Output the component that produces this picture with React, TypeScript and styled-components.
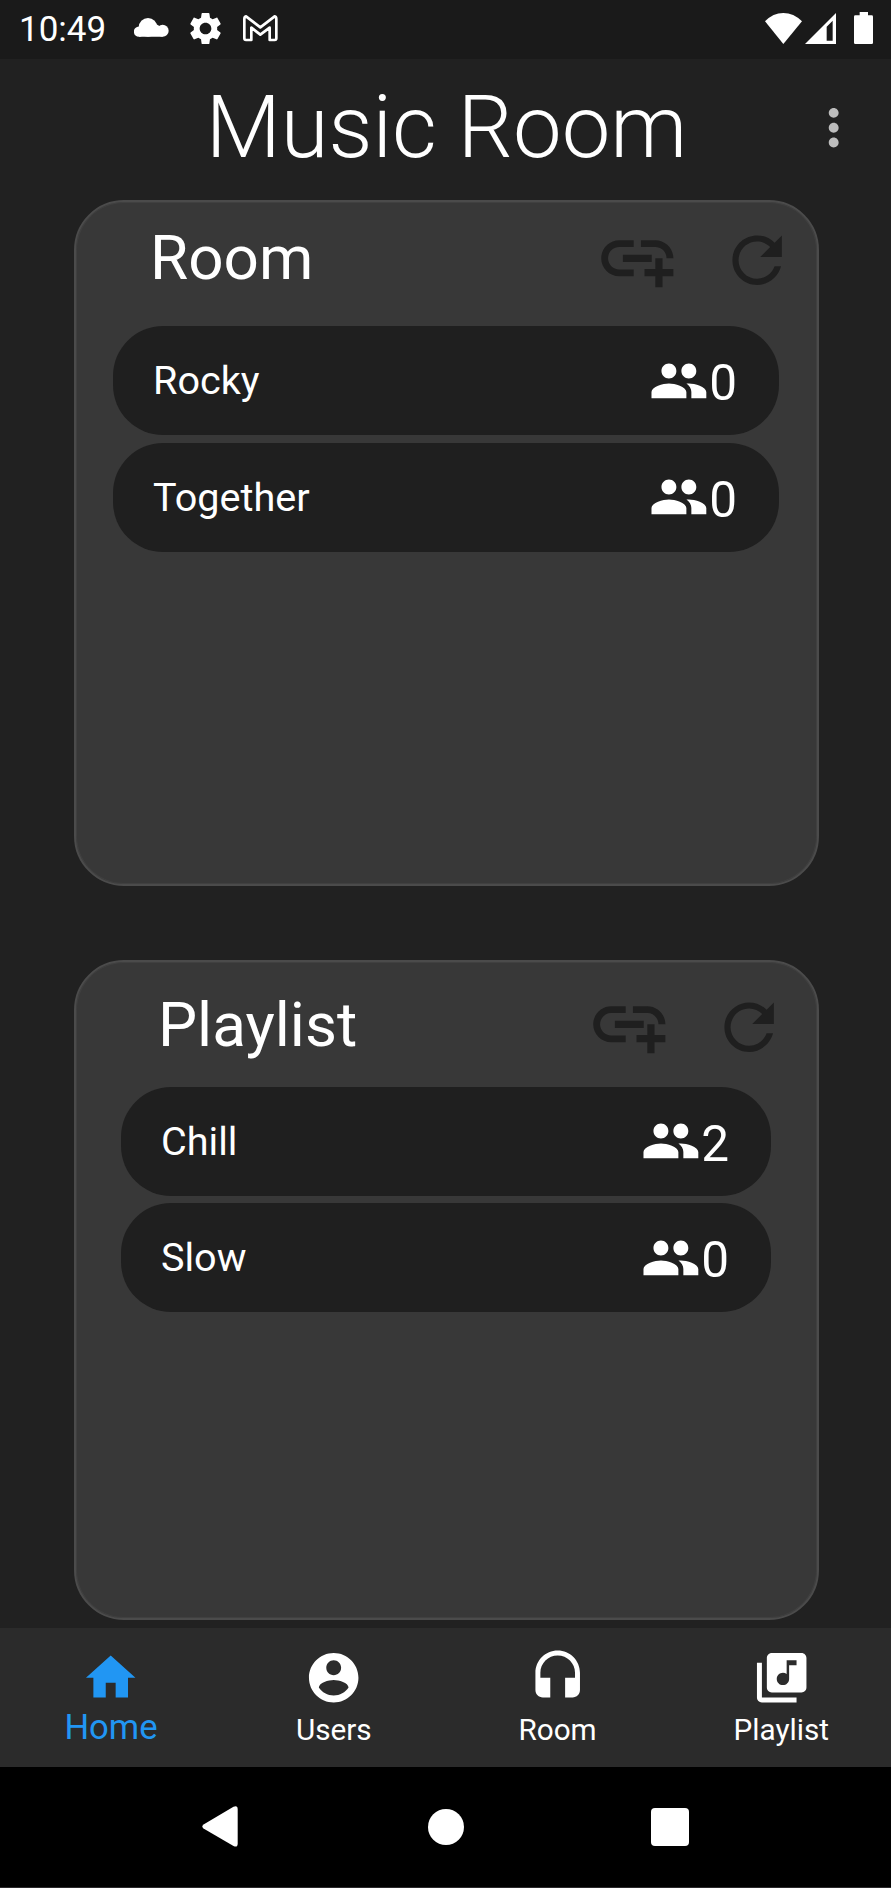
import React from "react";
import styled, { createGlobalStyle } from "styled-components";

const GlobalStyle = createGlobalStyle`
  * { box-sizing: border-box; }
  body { margin: 0; background: #212121; font-family: Roboto, "Liberation Sans", sans-serif; }
`;

const Screen = styled.div`
  display: flex;
  flex-direction: column;
  width: 891px;
  height: 1888px;
  background: #212121;
  color: #fff;
  overflow: hidden;
`;

const StatusBar = styled.header`
  display: flex;
  align-items: flex-start;
  justify-content: space-between;
  height: 59px;
  padding: 0 17px 0 19px;
  background: #1a1a1a;
`;

const StatusGroup = styled.div`
  display: flex;
  align-items: flex-start;
`;

const Clock = styled.span`
  width: 115px;
  font-size: 35px;
  line-height: 60px;
`;

const StatusIcon = styled.svg<{ $top: number; $right?: number }>`
  display: block;
  margin-top: ${(p) => p.$top}px;
  margin-right: ${(p) => p.$right ?? 0}px;
  fill: #fff;
`;

const AppBar = styled.div`
  display: grid;
  grid-template-columns: 88px 1fr 88px;
  align-items: center;
  height: 139px;
  padding: 0 13px 2px 15px;
`;

const Title = styled.h1`
  grid-column: 2;
  margin: 0 0 1px;
  text-align: center;
  white-space: nowrap;
  font-size: 86.8px;
  font-weight: 300;
  line-height: 100px;
`;

const MenuButton = styled.button`
  justify-self: center;
  display: block;
  padding: 0;
  border: 0;
  background: none;
  color: #bdbdbd;
`;

const Main = styled.main`
  flex: 1;
  display: flex;
  flex-direction: column;
  gap: 74px;
  padding: 2px 72px 0 74px;
`;

const Card = styled.section<{ $height: number; $inset: number }>`
  height: ${(p) => p.$height}px;
  padding: 0 ${(p) => p.$inset + 1}px 0 ${(p) => p.$inset}px;
  background: #383838;
  border: 2px solid #4b4b4b;
  border-radius: 50px;
  box-shadow: inset 0 0 0 1px #404040;
`;

const CardHeader = styled.div<{ $height: number; $top: number; $bottom: number }>`
  display: flex;
  align-items: center;
  height: ${(p) => p.$height}px;
  padding: ${(p) => p.$top}px 0 ${(p) => p.$bottom}px 37px;
`;

const CardTitle = styled.h2`
  flex: 1;
  margin: 0;
  font-size: 62px;
  font-weight: 400;
  line-height: 72px;
`;

const IconButton = styled.button`
  display: block;
  padding: 0;
  border: 0;
  background: none;
  color: #1f1f1f;
`;

const RefreshButton = styled(IconButton)`
  margin: 4px -15px 0 39px;
`;

const List = styled.ul`
  display: flex;
  flex-direction: column;
  gap: 7.425px;
  margin: 0;
  padding: 0;
  list-style: none;
`;

const Item = styled.li`
  display: flex;
  align-items: center;
  justify-content: space-between;
  height: 109.2px;
  padding: 0 42px 0 40px;
  border-radius: 50px;
  background: #1f1f1f;
`;

const ItemName = styled.span`
  font-size: 39.6px;
  line-height: 48px;
  padding-top: 1px;
`;

const Members = styled.span`
  display: flex;
  align-items: center;
`;

const MemberCount = styled.span`
  font-size: 49.5px;
  line-height: 58px;
  padding-top: 5px;
`;

const TabBar = styled.nav`
  display: grid;
  grid-template-columns: 222px repeat(3, 223.7px);
  height: 139px;
  background: #2b2b2b;
`;

const Tab = styled.a<{ $active?: boolean }>`
  display: flex;
  flex-direction: column;
  align-items: center;
  padding-top: 20px;
  color: ${(p) => (p.$active ? "#2196f3" : "#fff")};
`;

const TabLabel = styled.span<{ $active?: boolean }>`
  font-size: ${(p) => (p.$active ? 34.65 : 29.7)}px;
  line-height: 40px;
  margin-top: ${(p) => (p.$active ? 0 : 3)}px;
`;

const SystemNav = styled.footer`
  display: flex;
  align-items: center;
  gap: 187px;
  height: 121px;
  padding: 0 0 1px 202px;
  background: #000;
  border-bottom: 1px solid #2c2a2c;
`;

const SystemIcon = styled.svg`
  display: block;
  fill: #fff;
`;

const Glyph = styled.svg`
  display: block;
  fill: currentColor;
`;

const paths = {
  more: "M12 8c1.1 0 2-.9 2-2s-.9-2-2-2-2 .9-2 2 .9 2 2 2zm0 2c-1.1 0-2 .9-2 2s.9 2 2 2 2-.9 2-2-.9-2-2-2zm0 6c-1.1 0-2 .9-2 2s.9 2 2 2 2-.9 2-2-.9-2-2-2z",
  addLink:
    "M8 11h8v2H8zm12.1 1H22c0-2.76-2.24-5-5-5h-4v1.9h4c1.71 0 3.1 1.39 3.1 3.1zM3.9 12c0-1.71 1.39-3.1 3.1-3.1h4V7H7c-2.76 0-5 2.24-5 5s2.24 5 5 5h4v-1.9H7c-1.71 0-3.1-1.39-3.1-3.1zM19 12h-2v3h-3v2h3v3h2v-3h3v-2h-3z",
  refresh:
    "M17.65 6.35C16.2 4.9 14.21 4 12 4c-4.42 0-7.99 3.58-7.99 8s3.57 8 7.99 8c3.73 0 6.84-2.55 7.73-6h-2.08c-.82 2.33-3.04 4-5.65 4-3.31 0-6-2.69-6-6s2.69-6 6-6c1.66 0 3.14.69 4.22 1.78L13 11h7V4l-2.35 2.35z",
  people:
    "M16 11c1.66 0 2.99-1.34 2.99-3S17.66 5 16 5c-1.66 0-3 1.34-3 3s1.34 3 3 3zm-8 0c1.66 0 2.99-1.34 2.99-3S9.66 5 8 5C6.34 5 5 6.34 5 8s1.34 3 3 3zm0 2c-2.33 0-7 1.17-7 3.5V19h14v-2.5c0-2.33-4.67-3.5-7-3.5zm8 0c-.29 0-.62.02-.97.05 1.16.84 1.97 1.97 1.97 3.45V19h6v-2.5c0-2.33-4.67-3.5-7-3.5z",
  home: "M10 20v-6h4v6h5v-8h3L12 3 2 12h3v8z",
  account:
    "M12 2C6.48 2 2 6.48 2 12s4.48 10 10 10 10-4.48 10-10S17.52 2 12 2zm0 3c1.66 0 3 1.34 3 3s-1.34 3-3 3-3-1.34-3-3 1.34-3 3-3zm0 14.2c-2.5 0-4.71-1.28-6-3.22.03-1.99 4-3.08 6-3.08 1.99 0 5.97 1.09 6 3.08-1.29 1.94-3.5 3.22-6 3.22z",
  headset:
    "M12 1c-4.97 0-9 4.03-9 9v7c0 1.66 1.34 3 3 3h3v-8H5v-2c0-3.87 3.13-7 7-7s7 3.13 7 7v2h-4v8h3c1.66 0 3-1.34 3-3v-7c0-4.97-4.03-9-9-9z",
  library:
    "M20 2H8c-1.1 0-2 .9-2 2v12c0 1.1.9 2 2 2h12c1.1 0 2-.9 2-2V4c0-1.1-.9-2-2-2zm-2 5h-3v5.5c0 1.38-1.12 2.5-2.5 2.5S10 13.88 10 12.5s1.12-2.5 2.5-2.5c.57 0 1.08.19 1.5.51V5h4v2zM4 6H2v14c0 1.1.9 2 2 2h14v-2H4V6z",
  settings:
    "M19.14 12.94c.04-.3.06-.61.06-.94 0-.32-.02-.64-.07-.94l2.03-1.58c.18-.14.23-.41.12-.61l-1.92-3.32c-.12-.22-.37-.29-.59-.22l-2.39.96c-.5-.38-1.03-.7-1.62-.94l-.36-2.54c-.04-.24-.24-.41-.48-.41h-3.84c-.24 0-.43.17-.47.41l-.36 2.54c-.59.24-1.13.57-1.62.94l-2.39-.96c-.22-.08-.47 0-.59.22L2.74 8.87c-.12.21-.08.47.12.61l2.03 1.58c-.05.3-.09.63-.09.94s.02.64.07.94l-2.03 1.58c-.18.14-.23.41-.12.61l1.92 3.32c.12.22.37.29.59.22l2.39-.96c.5.38 1.03.7 1.62.94l.36 2.54c.05.24.24.41.48.41h3.84c.24 0 .44-.17.47-.41l.36-2.54c.59-.24 1.13-.56 1.62-.94l2.39.96c.22.08.47 0 .59-.22l1.92-3.32c.12-.22.07-.47-.12-.61l-2.01-1.58zM12 15.6c-1.98 0-3.6-1.62-3.6-3.6s1.62-3.6 3.6-3.6 3.6 1.62 3.6 3.6-1.62 3.6-3.6 3.6z",
};

type IconName = keyof typeof paths;

function Icon({ name, size }: { name: IconName; size: number }) {
  return (
    <Glyph width={size} height={size} viewBox="0 0 24 24" aria-hidden="true">
      <path d={paths[name]} />
    </Glyph>
  );
}

interface Entry {
  name: string;
  members: number;
}

interface CollectionProps {
  title: string;
  entries: Entry[];
  height: number;
  inset: number;
  headerHeight: number;
  headerTop?: number;
  headerBottom?: number;
}

function Collection({
  title,
  entries,
  height,
  inset,
  headerHeight,
  headerTop = 0,
  headerBottom = 0,
}: CollectionProps) {
  return (
    <Card $height={height} $inset={inset}>
      <CardHeader $height={headerHeight} $top={headerTop} $bottom={headerBottom}>
        <CardTitle>{title}</CardTitle>
        <IconButton aria-label="Add">
          <Icon name="addLink" size={86.6} />
        </IconButton>
        <RefreshButton aria-label="Refresh">
          <Icon name="refresh" size={74.25} />
        </RefreshButton>
      </CardHeader>
      <List>
        {entries.map((entry) => (
          <Item key={entry.name}>
            <ItemName>{entry.name}</ItemName>
            <Members>
              <Icon name="people" size={59.8} />
              <MemberCount>{entry.members}</MemberCount>
            </Members>
          </Item>
        ))}
      </List>
    </Card>
  );
}

const tabs: { label: string; icon: IconName; active?: boolean }[] = [
  { label: "Home", icon: "home", active: true },
  { label: "Users", icon: "account" },
  { label: "Room", icon: "headset" },
  { label: "Playlist", icon: "library" },
];

export default function App() {
  return (
    <>
      <GlobalStyle />
      <Screen>
        <StatusBar>
          <StatusGroup>
            <Clock>10:49</Clock>
            <StatusIcon $top={18} $right={17} width="35" height="19" viewBox="0 0 105 57">
              <circle cx="15" cy="41" r="15.500" />
              <circle cx="42" cy="28" r="28" />
              <circle cx="86" cy="38" r="18" />
              <path d="M15 36L42 20H70L86 30V56H15Z" />
            </StatusIcon>
            <StatusIcon $top={9} $right={18} width="39" height="39" viewBox="0 0 24 24">
              <path d={paths.settings} />
            </StatusIcon>
            <StatusIcon $top={15} width="35" height="27" viewBox="0 0 105 81">
              <path
                d="M9 4L52 37L95 4Q100 5 100 12V70Q100 75 95 75H80V38L52 59L25 38V75H9Q4 75 4 70V12Q4 5 9 4Z"
                fill="none"
                stroke="#fff"
                strokeWidth="8"
                strokeLinejoin="round"
              />
            </StatusIcon>
          </StatusGroup>
          <StatusGroup>
            <StatusIcon $top={13} $right={3} width="37" height="31" viewBox="0 0 111 93">
              <path d="M0 25Q24 0 55 0T111 25L55 93Z" />
            </StatusIcon>
            <StatusIcon $top={13} $right={18} width="31" height="31" viewBox="0 0 93 93">
              <path fillRule="evenodd" d="M0 93L93 0V93ZM65 41V83H83V23Z" />
            </StatusIcon>
            <StatusIcon $top={12} $right={1} width="19" height="32" viewBox="0 0 57 96">
              <path d="M17 0H42V10H53Q57 10 57 14V92Q57 96 53 96H4Q0 96 0 92V14Q0 10 4 10H17Z" />
            </StatusIcon>
          </StatusGroup>
        </StatusBar>
        <AppBar>
          <Title>Music Room</Title>
          <MenuButton aria-label="More options">
            <Icon name="more" size={59.4} />
          </MenuButton>
        </AppBar>
        <Main>
          <Collection
            title="Room"
            height={686}
            inset={37}
            headerHeight={124}
            headerBottom={12}
            entries={[
              { name: "Rocky", members: 0 },
              { name: "Together", members: 0 },
            ]}
          />
          <Collection
            title="Playlist"
            height={660}
            inset={45}
            headerHeight={124.5}
            headerTop={1}
            entries={[
              { name: "Chill", members: 2 },
              { name: "Slow", members: 0 },
            ]}
          />
        </Main>
        <TabBar>
          {tabs.map((tab) => (
            <Tab key={tab.label} $active={tab.active}>
              <Icon name={tab.icon} size={59.4} />
              <TabLabel $active={tab.active}>{tab.label}</TabLabel>
            </Tab>
          ))}
        </TabBar>
        <SystemNav>
          <SystemIcon width="39" height="41" viewBox="0 0 39 41">
            <path d="M31.500 .8Q35.700 -1 35.700 3.500V37.500Q35.700 42 31.500 40L1.500 22.500Q-.8 20.500 1.500 18.500Z" />
          </SystemIcon>
          <SystemIcon width="36" height="36" viewBox="0 0 36 36">
            <circle cx="18" cy="18" r="18" />
          </SystemIcon>
          <SystemIcon width="38" height="38" viewBox="0 0 38 38">
            <rect width="38" height="38" rx="4" />
          </SystemIcon>
        </SystemNav>
      </Screen>
    </>
  );
}
